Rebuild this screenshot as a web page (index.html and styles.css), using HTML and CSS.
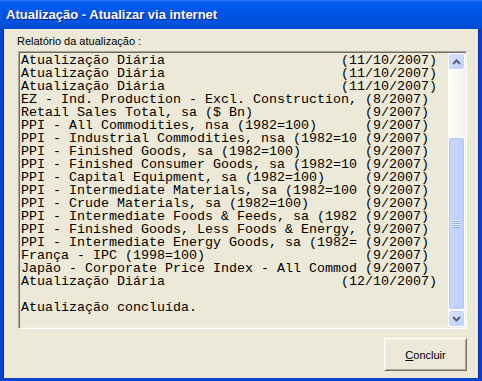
FILE: index.html
```html
<!DOCTYPE html>
<html lang="pt">
<head>
<meta charset="utf-8">
<title>Atualização - Atualizar via internet</title>
<link rel="stylesheet" href="styles.css">
</head>
<body>
<div class="window">
  <div class="titlebar"><span class="title">Atualização - Atualizar via internet</span></div>
  <div class="client">
    <div class="label">Relatório da atualização :</div>
    <div class="textbox">
<pre class="log">Atualização Diária                      (11/10/2007)
Atualização Diária                      (11/10/2007)
Atualização Diária                      (11/10/2007)
EZ - Ind. Production - Excl. Construction, (8/2007)
Retail Sales Total, sa ($ Bn)              (9/2007)
PPI - All Commodities, nsa (1982=100)      (9/2007)
PPI - Industrial Commodities, nsa (1982=10 (9/2007)
PPI - Finished Goods, sa (1982=100)        (9/2007)
PPI - Finished Consumer Goods, sa (1982=10 (9/2007)
PPI - Capital Equipment, sa (1982=100)     (9/2007)
PPI - Intermediate Materials, sa (1982=100 (9/2007)
PPI - Crude Materials, sa (1982=100)       (9/2007)
PPI - Intermediate Foods &amp; Feeds, sa (1982 (9/2007)
PPI - Finished Goods, Less Foods &amp; Energy, (9/2007)
PPI - Intermediate Energy Goods, sa (1982= (9/2007)
França - IPC (1998=100)                    (9/2007)
Japão - Corporate Price Index - All Commod (9/2007)
Atualização Diária                      (12/10/2007)

Atualização concluída.</pre>
      <div class="vscroll">
        <div class="sbtn">
          <svg width="9" height="6" viewBox="0 0 9 6"><polyline points="1,5 4.5,1.5 8,5" fill="none" stroke="#4D6185" stroke-width="2"/></svg>
        </div>
        <div class="track">
          <div class="track-gap"></div>
          <div class="thumb"><span class="grip"></span></div>
        </div>
        <div class="sbtn">
          <svg width="9" height="6" viewBox="0 0 9 6"><polyline points="1,1 4.5,4.5 8,1" fill="none" stroke="#4D6185" stroke-width="2"/></svg>
        </div>
      </div>
    </div>
    <div class="actions">
      <button class="btn" type="button"><u>C</u>oncluir</button>
    </div>
  </div>
</div>
</body>
</html>
```
FILE: styles.css
```css
html, body {
  margin: 0;
  padding: 0;
  background: #ECE9D8;
}

.window {
  width: 482px;
  height: 381px;
  display: flex;
  flex-direction: column;
  box-sizing: border-box;
}

.titlebar {
  height: 29px;
  flex: none;
  display: flex;
  align-items: center;
  padding-left: 6px;
  background: linear-gradient(to bottom, #2F7BF5 0px, #0A5DEB 2px, #0058EE 6px, #0054E3 16px, #0052DD 24px, #0048CC 29px);
}

.title {
  font-family: "Liberation Sans", Arial, sans-serif;
  font-weight: bold;
  font-size: 13px;
  color: #FFFFFF;
  text-shadow: 1px 1px 0 #0A1F8F;
  position: relative;
  top: 0px;
}

.client {
  flex: 1;
  display: flex;
  flex-direction: column;
  background: #ECE9D8;
  border-left: 3px solid #0841D0;
  border-right: 3px solid #0841D0;
  border-bottom: 3px solid #0841D0;
  box-shadow: inset 1px 0 0 #0A2AA8, inset -1px 0 0 #0A2AA8;
  padding: 6px 12px 7px 14px;
}

.label {
  font-family: "Liberation Sans", Arial, sans-serif;
  font-size: 11px;
  line-height: 13px;
  color: #000000;
  margin-bottom: 3px;
}

.textbox {
  margin-left: 1px;
  height: 278px;
  box-sizing: border-box;
  border-style: solid;
  border-width: 1px;
  border-color: #ACA899 #FFFFFF #FFFFFF #ACA899;
  box-shadow: inset 1px 1px 0 #716F64, inset -1px -1px 0 #F1EFE2;
  padding: 1px;
  display: flex;
  background: #ECE9D8;
}

.log {
  flex: 1;
  margin: 0;
  padding: 1px 0 0 1px;
  overflow: hidden;
  font-family: "Liberation Mono", "Courier New", monospace;
  font-size: 13.333px;
  line-height: 13px;
  color: #000000;
}

.vscroll {
  width: 17px;
  flex: none;
  display: flex;
  flex-direction: column;
  background: linear-gradient(to right, #FEFEFB, #F3F1EA);
}

.sbtn {
  height: 17px;
  flex: none;
  box-sizing: border-box;
  border: 1px solid #FFFFFF;
  border-radius: 3px;
  background: linear-gradient(to bottom right, #DCE6FD, #BCCFFA);
  box-shadow: inset 0 0 0 1px #C3D3FD;
  display: flex;
  align-items: center;
  justify-content: center;
}

.track {
  flex: 1;
  display: flex;
  flex-direction: column;
}

.track-gap {
  height: 67px;
  flex: none;
}

.thumb {
  flex: 1;
  box-sizing: border-box;
  border: 1px solid #FFFFFF;
  border-radius: 3px;
  background: linear-gradient(to right, #CAD8FD, #BDCEF9);
  box-shadow: inset 0 0 0 1px #B3C7F6;
  display: flex;
  align-items: center;
  justify-content: center;
}

.grip {
  width: 7px;
  height: 8px;
  background: repeating-linear-gradient(to bottom, #EEF4FE 0px, #EEF4FE 1px, #8CAEF5 1px, #8CAEF5 2px);
}

.actions {
  margin-top: 9px;
  display: flex;
  justify-content: flex-end;
}

.btn {
  width: 83px;
  height: 33px;
  box-sizing: border-box;
  margin: 0;
  padding: 0;
  background: #ECE9D8;
  border-style: solid;
  border-width: 1px;
  border-color: #FFFFFF #716F64 #716F64 #FFFFFF;
  box-shadow: inset 1px 1px 0 #F1EFE2, inset -1px -1px 0 #ACA899;
  font-family: "Liberation Sans", Arial, sans-serif;
  font-size: 11px;
  color: #000000;
}
```
